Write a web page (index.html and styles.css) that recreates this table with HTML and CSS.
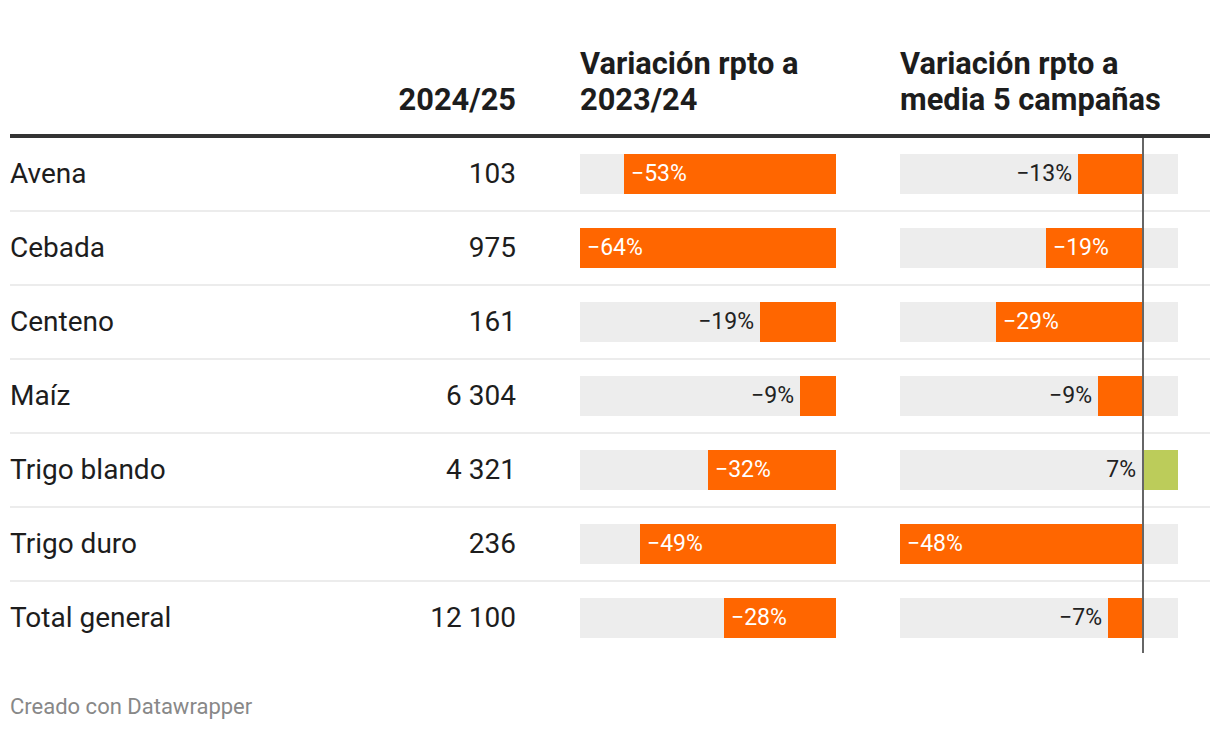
FILE: index.html
```html
<!DOCTYPE html>
<html lang="es">
<head>
<meta charset="utf-8">
<title>Variación producción cereales</title>
<link rel="stylesheet" href="styles.css">
</head>
<body>
<div class="chart">
  <div class="row head">
    <div class="cell name"></div>
    <div class="cell num">2024/25</div>
    <div class="cell">Variación rpto a<br>2023/24</div>
    <div class="cell">Variación rpto a<br>media 5 campañas</div>
  </div>
  <div class="body">
    <div class="row">
      <div class="cell name">Avena</div>
      <div class="cell num">103</div>
      <div class="cell"><div class="track t1"><div class="neg n1"><div class="bar in" style="width:212px">−53%</div></div></div></div>
      <div class="cell"><div class="track t2"><div class="neg n2"><span class="out">−13%</span><div class="bar" style="width:64px"></div></div><div class="pos"></div></div></div>
    </div>
    <div class="row">
      <div class="cell name">Cebada</div>
      <div class="cell num">975</div>
      <div class="cell"><div class="track t1"><div class="neg n1"><div class="bar in" style="width:256px">−64%</div></div></div></div>
      <div class="cell"><div class="track t2"><div class="neg n2"><div class="bar in" style="width:96px">−19%</div></div><div class="pos"></div></div></div>
    </div>
    <div class="row">
      <div class="cell name">Centeno</div>
      <div class="cell num">161</div>
      <div class="cell"><div class="track t1"><div class="neg n1"><span class="out">−19%</span><div class="bar" style="width:76px"></div></div></div></div>
      <div class="cell"><div class="track t2"><div class="neg n2"><div class="bar in" style="width:146px">−29%</div></div><div class="pos"></div></div></div>
    </div>
    <div class="row">
      <div class="cell name">Maíz</div>
      <div class="cell num">6 304</div>
      <div class="cell"><div class="track t1"><div class="neg n1"><span class="out">−9%</span><div class="bar" style="width:36px"></div></div></div></div>
      <div class="cell"><div class="track t2"><div class="neg n2"><span class="out">−9%</span><div class="bar" style="width:44px"></div></div><div class="pos"></div></div></div>
    </div>
    <div class="row">
      <div class="cell name">Trigo blando</div>
      <div class="cell num">4 321</div>
      <div class="cell"><div class="track t1"><div class="neg n1"><div class="bar in" style="width:128px">−32%</div></div></div></div>
      <div class="cell"><div class="track t2"><div class="neg n2"><span class="out">7%</span></div><div class="pos"><div class="bar up" style="width:36px"></div></div></div></div>
    </div>
    <div class="row">
      <div class="cell name">Trigo duro</div>
      <div class="cell num">236</div>
      <div class="cell"><div class="track t1"><div class="neg n1"><div class="bar in" style="width:196px">−49%</div></div></div></div>
      <div class="cell"><div class="track t2"><div class="neg n2"><div class="bar in" style="width:242px">−48%</div></div><div class="pos"></div></div></div>
    </div>
    <div class="row last">
      <div class="cell name">Total general</div>
      <div class="cell num">12 100</div>
      <div class="cell"><div class="track t1"><div class="neg n1"><div class="bar in" style="width:112px">−28%</div></div></div></div>
      <div class="cell"><div class="track t2"><div class="neg n2"><span class="out">−7%</span><div class="bar" style="width:34px"></div></div><div class="pos"></div></div></div>
    </div>
    <div class="zero"></div>
  </div>
  <div class="foot">Creado con Datawrapper</div>
</div>
</body>
</html>
```

FILE: styles.css
```css
* { box-sizing: border-box; }
html, body { margin: 0; padding: 0; background: #fff; }
body {
  font-family: Roboto, "Noto Sans", sans-serif;
  color: #1d1d1d;
}
.chart {
  width: 1200px;
  margin-left: 10px;
  padding-top: 46px;
}
.row {
  display: grid;
  grid-template-columns: 1fr 120px 256px 278px;
  column-gap: 64px;
  padding-right: 32px;
  align-items: center;
}
.head {
  align-items: end;
  font-weight: 700;
  font-size: 30.8px;
  line-height: 36px;
  padding-bottom: 16px;
  border-bottom: 4px solid #333;
}
.body {
  position: relative;
}
.body .row {
  padding-top: 16px;
  padding-bottom: 16px;
  border-bottom: 2px solid #ececec;
  font-size: 28px;
  line-height: 40px;
}
.body .row.last { border-bottom: none; }
.num { text-align: right; white-space: nowrap; }
.track {
  display: flex;
  height: 40px;
  background: #ededed;
}
.neg {
  display: flex;
  justify-content: flex-end;
  align-items: center;
  height: 40px;
}
.n1 { width: 256px; }
.n2 { width: 242px; }
.pos {
  display: flex;
  width: 36px;
  height: 40px;
}
.bar {
  height: 40px;
  background: #ff6600;
  flex: none;
}
.bar.up { background: #bccc5a; }
.bar.in {
  color: #fff;
  font-size: 23px;
  line-height: 40px;
  padding-left: 7px;
  white-space: nowrap;
}
.out {
  font-size: 23px;
  line-height: 40px;
  color: #222;
  margin-right: 6px;
  white-space: nowrap;
}
.zero {
  position: absolute;
  left: 1132px;
  top: 0;
  bottom: 1px;
  width: 2px;
  background: #666;
}
.foot {
  margin-top: 39px;
  font-size: 22px;
  line-height: 28px;
  color: #888;
}
```
